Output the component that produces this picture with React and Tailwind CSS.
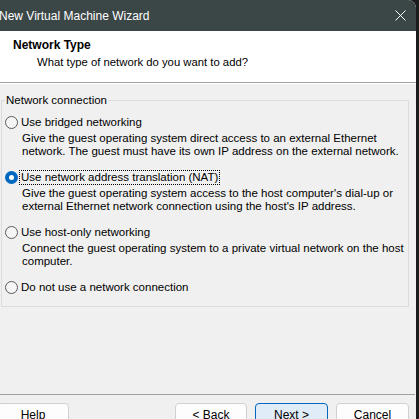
import React from "react";

function Radio({ checked }) {
  return checked ? (
    <span className="w-[13px] h-[13px] rounded-full bg-[#0067c0] flex items-center justify-center shrink-0">
      <span className="w-[5px] h-[5px] rounded-full bg-white" />
    </span>
  ) : (
    <span className="w-[13px] h-[13px] rounded-full border border-[#5a5a5a] bg-[#f5f5f5] shrink-0" />
  );
}

function Option({ label, desc, checked, mt }) {
  return (
    <div className={mt}>
      <div className="flex items-center h-[14px] pl-[3px]">
        <Radio checked={checked} />
        <span
          className={
            "ml-[2px] pl-[1px] pr-[1px] leading-[13px] whitespace-nowrap " +
            (checked ? "outline outline-1 outline-dotted outline-black" : "")
          }
        >
          {label}
        </span>
      </div>
      {desc && (
        <div className="pl-[20px] mt-[3px] leading-[13px] whitespace-pre">{desc}</div>
      )}
    </div>
  );
}

function Btn({ children, primary, w, ml }) {
  return (
    <div
      className={
        "h-[24px] rounded-[4px] border flex items-center justify-center shrink-0 " +
        w +
        " " +
        ml +
        " " +
        (primary ? "border-[#0067c0] bg-[#e0ecf8]" : "border-[#d0d0d0] bg-[#fdfdfd]")
      }
    >
      {children}
    </div>
  );
}

export default function App() {
  return (
    <div
      className="w-[419px] h-[419px] bg-[#1c1c1c] flex overflow-hidden text-[11.5px] text-black"
      style={{ fontFamily: "'Liberation Sans', Arial, sans-serif" }}
    >
      <div className="w-[416px] h-full flex flex-col bg-[#f0f0f0] rounded-tr-[8px] overflow-hidden shrink-0">
        <div className="h-[31px] bg-[#3b4647] flex items-center justify-between text-white text-[12px] pl-0 pr-[10px] shrink-0">
          <span className="-ml-[1px]">New Virtual Machine Wizard</span>
          <svg width="11" height="11" viewBox="0 0 11 11">
            <path d="M0.5 0.5 L10.5 10.5 M10.5 0.5 L0.5 10.5" stroke="white" strokeWidth="1" />
          </svg>
        </div>
        <div className="h-[51px] bg-white shrink-0 pt-[7px]">
          <div className="pl-[13px] font-bold text-[12px] leading-[15px]">Network Type</div>
          <div className="pl-[37px] mt-[2px] leading-[14px] text-[11.3px]">What type of network do you want to add?</div>
        </div>
        <div className="h-[1px] bg-[#a0a0a0] shrink-0" />
        <div className="h-[1px] bg-white shrink-0" />
        <div className="flex-1 flex flex-col">
          <div className="mt-[16px] ml-[1px] w-[408px] h-[207px] border border-[#dcdcdc] relative shrink-0">
            <span className="absolute -top-[8px] left-[3px] px-[1px] bg-[#f0f0f0] leading-[14px]">
              Network connection
            </span>
            <Option
              mt="mt-[14px]"
              label="Use bridged networking"
              desc={"Give the guest operating system direct access to an external Ethernet\nnetwork. The guest must have its own IP address on the external network."}
            />
            <Option
              mt="mt-[12px]"
              checked
              label="Use network address translation (NAT)"
              desc={"Give the guest operating system access to the host computer's dial-up or\nexternal Ethernet network connection using the host's IP address."}
            />
            <Option
              mt="mt-[12px]"
              label="Use host-only networking"
              desc={"Connect the guest operating system to a private virtual network on the host\ncomputer."}
            />
            <Option mt="mt-[12px]" label="Do not use a network connection" />
          </div>
          <div className="mt-[87px] h-[1px] bg-[#a0a0a0] w-[415px] shrink-0" />
          <div className="mt-[8px] flex text-[12px]">
            <Btn w="w-[72px]" ml="-ml-[3px]">Help</Btn>
            <Btn w="w-[72px]" ml="ml-[106px]">&lt; Back</Btn>
            <Btn w="w-[73px]" ml="ml-[8px]" primary>Next &gt;</Btn>
            <Btn w="w-[73px]" ml="ml-[8px]">Cancel</Btn>
          </div>
        </div>
      </div>
    </div>
  );
}
